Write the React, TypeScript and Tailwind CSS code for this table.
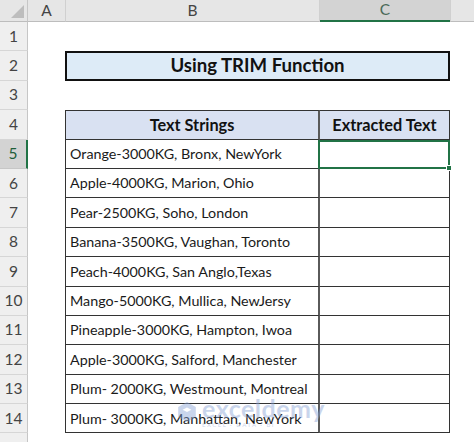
import React from "react"

const rows = [
  "Orange-3000KG, Bronx, NewYork",
  "Apple-4000KG, Marion, Ohio",
  "Pear-2500KG, Soho, London",
  "Banana-3500KG, Vaughan, Toronto",
  "Peach-4000KG, San Anglo,Texas",
  "Mango-5000KG, Mullica, NewJersy",
  "Pineapple-3000KG, Hampton, Iwoa",
  "Apple-3000KG, Salford, Manchester",
  "Plum- 2000KG, Westmount, Montreal",
  "Plum- 3000KG, Manhattan, NewYork",
]

const font = { fontFamily: "Lato, 'Open Sans', sans-serif" }

function RowHead({ n, active }: { n: number; active?: boolean }) {
  return (
    <div
      className={
        active
          ? "flex items-center justify-center bg-[#d3d3d3] border-r-2 border-r-[#217346] border-b border-b-[#c6c6c6] text-[15.5px] text-[#1e5e3a]"
          : "flex items-center justify-center bg-[#efefef] border-r border-r-[#c6c6c6] border-b border-b-[#d6d6d6] text-[15.5px] text-[#444]"
      }
    >
      {n}
    </div>
  )
}

export default function App() {
  return (
    <div className="relative w-[474px] h-[442px] overflow-hidden bg-white text-[#111]" style={font}>
      <div className="grid grid-cols-[28px_38px_254px_130px_1fr] grid-rows-[22px_repeat(14,29.4px)_1fr] h-full">
        {/* header row */}
        <div className="relative bg-[#e6e6e6] border-r border-r-[#c6c6c6] border-b border-b-[#bdbdbd]">
          <svg className="absolute right-[3px] bottom-[3px]" width="13" height="13" viewBox="0 0 13 13">
            <path d="M13 0 L13 13 L0 13 Z" fill="#bdbdbd" />
          </svg>
        </div>
        <div className="flex items-center justify-center bg-[#e6e6e6] border-r border-r-[#d0d0d0] border-b border-b-[#bdbdbd] text-[15.5px] text-[#444]">A</div>
        <div className="flex items-center justify-center bg-[#e6e6e6] border-r border-r-[#d0d0d0] border-b border-b-[#bdbdbd] text-[15.5px] text-[#444]">B</div>
        <div className="flex items-center justify-center bg-[#d3d3d3] border-b-2 border-b-[#217346] text-[15.5px] text-[#4a6a58]">C</div>
        <div className="bg-[#e6e6e6] border-l border-l-[#d0d0d0] border-b border-b-[#bdbdbd]" />

        {/* row 1 */}
        <RowHead n={1} />
        <div className="col-span-4" />

        {/* row 2 */}
        <RowHead n={2} />
        <div />
        <div className="col-span-2 -ml-px flex items-center justify-center border-2 border-[#111] bg-[#ddebf7] text-[18.6px] font-bold">
          Using TRIM Function
        </div>
        <div />

        {/* row 3 */}
        <RowHead n={3} />
        <div className="col-span-4" />

        {/* row 4 */}
        <RowHead n={4} />
        <div className="border-r border-r-[#333]" />
        <div className="flex items-center justify-center bg-[#d9e1f2] border-t border-t-[#333] border-b border-b-[#333] border-r-2 border-r-[#5a5a5a] text-[16.3px] font-bold">
          Text Strings
        </div>
        <div className="flex items-center justify-center bg-[#d9e1f2] border-t border-t-[#333] border-b border-b-[#333] border-r border-r-[#333] text-[16.3px] font-bold">
          Extracted Text
        </div>
        <div />

        {rows.map((t, i) => (
          <React.Fragment key={i}>
            <RowHead n={i + 5} active={i === 0} />
            <div className="border-r border-r-[#333]" />
            <div className="flex items-center pl-[4px] border-b border-b-[#333] border-r-2 border-r-[#5a5a5a] text-[14.3px] text-[#1a1a1a] whitespace-nowrap">
              {t}
            </div>
            {i === 0 ? (
              <div className="relative border-2 border-[#217346] -ml-[2px]">
                <div className="absolute -right-[4px] -bottom-[4px] w-[6px] h-[6px] bg-[#217346] border border-white" />
              </div>
            ) : (
              <div className="border-b border-b-[#333] border-r border-r-[#333]" />
            )}
            <div />
          </React.Fragment>
        ))}

        {/* row 15 partial */}
        <div className="bg-[#efefef] border-r border-r-[#c6c6c6]" />
        <div className="col-span-4" />
      </div>

      {/* watermark */}
      <div className="absolute left-[176px] top-[396px] flex items-center gap-[4px] opacity-45 pointer-events-none">
        <svg width="22" height="22" viewBox="0 0 20 20">
          <path d="M10 1 L18 5.5 L18 14.5 L10 19 L2 14.5 L2 5.5 Z" fill="#8aa4d6" />
          <path d="M6 8 L10 6 L14 8 L10 10 Z" fill="#ffffff" />
        </svg>
        <div className="flex flex-col leading-none">
          <span className="text-[25px] font-bold text-[#8aa4d6] tracking-[0.5px]">exceldemy</span>
          <span className="text-[6px] text-[#8aa4d6] tracking-[1.5px] mt-[1px]">EXCEL · DATA · BI</span>
        </div>
      </div>
    </div>
  )
}
